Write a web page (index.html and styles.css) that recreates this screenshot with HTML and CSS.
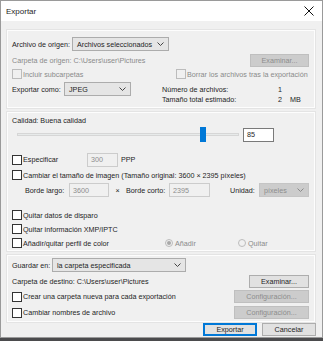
FILE: index.html
```html
<!DOCTYPE html>
<html lang="es">
<head>
  <meta charset="UTF-8" />
  <title>Exportar</title>
  <link rel="stylesheet" href="styles.css">
</head>
<body>
  <div class="window">
    <div class="titlebar">
      <span class="title">Exportar</span>
      <svg class="close" width="10" height="10" viewBox="0 0 10 10"><path d="M0.5 0.5L9.5 9.5M9.5 0.5L0.5 9.5" stroke="#111" stroke-width="1"/></svg>
    </div>

    <div class="content">
      <!-- Source -->
      <div class="group source">
        <div class="row h14">
          <label class="lbl w60">Archivo de origen:</label>
          <div class="select w97"><span>Archivos seleccionados</span><svg class="chev" width="7" height="4" viewBox="0 0 7 4"><path d="M0.5 0.5L3.5 3.5L6.5 0.5" fill="none" stroke="#444"/></svg></div>
        </div>
        <div class="row h13 mt3">
          <span class="muted">Carpeta de origen: C:\Users\user\Pictures</span>
          <span class="spacer"></span>
          <button class="btn disabled w59">Examinar...</button>
        </div>
        <div class="row h12 mt1">
          <div class="check-item disabled w164"><span class="box"></span>Incluir subcarpetas</div>
          <div class="check-item disabled"><span class="box"></span>Borrar los archivos tras la exportación</div>
        </div>
        <div class="row top mt2">
          <div class="format w150">
            <label class="lbl w52">Exportar como:</label>
            <div class="select w67"><span>JPEG</span><svg class="chev" width="7" height="4" viewBox="0 0 7 4"><path d="M0.5 0.5L3.5 3.5L6.5 0.5" fill="none" stroke="#444"/></svg></div>
          </div>
          <div class="info">
            <div class="info-line"><span class="info-key">Número de archivos:</span><span class="info-val">1</span></div>
            <div class="info-line"><span class="info-key">Tamaño total estimado:</span><span class="info-val">2</span><span>MB</span></div>
          </div>
        </div>
      </div>

      <!-- Image options -->
      <div class="group image">
        <div class="row h10">Calidad: Buena calidad</div>
        <div class="row h15 mt2">
          <div class="slider">
            <div class="track"></div>
            <div class="thumb" style="left: 183px"></div>
          </div>
          <div class="input w31">85</div>
        </div>
        <div class="row h13 mt11">
          <div class="check-item w75"><span class="box"></span>Especificar</div>
          <div class="input disabled w31">300</div>
          <span class="unit">PPP</span>
        </div>
        <div class="row h10 mt4">
          <div class="check-item"><span class="box"></span>Cambiar el tamaño de imagen (Tamaño original: 3600 × 2395 píxeles)</div>
        </div>
        <div class="row h14 mt3 indent">
          <label class="lbl w44">Borde largo:</label>
          <div class="input disabled w40">3600</div>
          <span class="times">×</span>
          <label class="lbl w43">Borde corto:</label>
          <div class="input disabled w41">2395</div>
          <label class="lbl w29 ml20">Unidad:</label>
          <div class="select disabled w50"><span>píxeles</span><svg class="chev" width="7" height="4" viewBox="0 0 7 4"><path d="M0.5 0.5L3.5 3.5L6.5 0.5" fill="none" stroke="#8a8a8a"/></svg></div>
        </div>
        <div class="row h10 mt13">
          <div class="check-item"><span class="box"></span>Quitar datos de disparo</div>
        </div>
        <div class="row h10 mt4">
          <div class="check-item"><span class="box"></span>Quitar información XMP/IPTC</div>
        </div>
        <div class="row h10 mt4">
          <div class="check-item w153"><span class="box"></span>Añadir/quitar perfil de color</div>
          <div class="radio-item disabled checked w73"><span class="dot"></span>Añadir</div>
          <div class="radio-item disabled"><span class="dot"></span>Quitar</div>
        </div>
      </div>

      <!-- Destination -->
      <div class="group dest">
        <div class="row h14">
          <label class="lbl w40">Guardar en:</label>
          <div class="select w134"><span>la carpeta especificada</span><svg class="chev" width="7" height="4" viewBox="0 0 7 4"><path d="M0.5 0.5L3.5 3.5L6.5 0.5" fill="none" stroke="#444"/></svg></div>
        </div>
        <div class="row h13 mt3">
          <span>Carpeta de destino: C:\Users\user\Pictures</span>
          <span class="spacer"></span>
          <button class="btn w60">Examinar...</button>
        </div>
        <div class="row h13 mt2">
          <div class="check-item"><span class="box"></span>Crear una carpeta nueva para cada exportación</div>
          <span class="spacer"></span>
          <button class="btn disabled w75">Configuración...</button>
        </div>
        <div class="row h13 mt3">
          <div class="check-item"><span class="box"></span>Cambiar nombres de archivo</div>
          <span class="spacer"></span>
          <button class="btn disabled w75">Configuración...</button>
        </div>
      </div>

      <div class="footer">
        <button class="btn default w54">Exportar</button>
        <button class="btn w54">Cancelar</button>
      </div>
    </div>
  </div>
</body>
</html>
```

FILE: styles.css
```css
* {
  box-sizing: border-box;
  margin: 0;
  padding: 0;
}
body {
  font-family: 'Liberation Sans', Arial, sans-serif;
  font-size: 7.2px;
  color: #1e1e1e;
  background-color: #4b4b4d;
  overflow: hidden;
}
.window {
  width: 323px;
  height: 338px;
  background-color: #f0f0f0;
  border: 1px solid #9a9a9a;
  display: flex;
  flex-direction: column;
}
.titlebar {
  height: 20px;
  background-color: #fff;
  display: flex;
  align-items: center;
  justify-content: space-between;
  padding: 0 8px 0 5px;
  font-size: 8px;
}
.close {
  display: block;
}
.content {
  padding: 9px 7px 0 6px;
  display: flex;
  flex-direction: column;
  gap: 4px;
}
.group {
  border: 1px solid #fdfdfd;
  box-shadow: 0 0 0 1px #e4e4e4;
  padding: 6px 5px 3px 4px;
}
.group.image {
  padding-top: 2px;
  padding-bottom: 2px;
}
.group.dest {
  padding-top: 2px;
  padding-bottom: 2px;
}
.row {
  display: flex;
  align-items: center;
  white-space: nowrap;
}
.row.top {
  align-items: flex-start;
}
.spacer {
  flex: 1;
}
.indent {
  padding-left: 13px;
}
.h10 { height: 10px; }
.h12 { height: 12px; }
.h13 { height: 13px; }
.h14 { height: 14px; }
.h15 { height: 15px; }
.mt1 { margin-top: 1px; }
.mt2 { margin-top: 2px; }
.mt3 { margin-top: 3px; }
.mt4 { margin-top: 4px; }
.mt11 { margin-top: 11px; }
.mt13 { margin-top: 13px; }
.ml20 { margin-left: 20px; }
.w29 { width: 29px; }
.w31 { width: 31px; }
.w40 { width: 40px; }
.w41 { width: 41px; }
.w43 { width: 43px; }
.w44 { width: 44px; }
.w50 { width: 50px; }
.w52 { width: 52px; }
.w54 { width: 54px; }
.w59 { width: 59px; }
.w60 { width: 60px; }
.w67 { width: 67px; }
.w73 { width: 73px; }
.w75 { width: 75px; }
.w97 { width: 97px; }
.w134 { width: 134px; }
.w150 { width: 150px; }
.w153 { width: 153px; }
.w164 { width: 164px; }
.lbl {
  flex-shrink: 0;
}
.muted {
  color: #8a8a8a;
}
.select {
  height: 14px;
  background-color: #e5e5e5;
  border: 1px solid #acacac;
  display: flex;
  align-items: center;
  justify-content: space-between;
  padding: 0 4px 0 4px;
  flex-shrink: 0;
}
.select.disabled {
  background-color: #cccccc;
  border-color: #c5c5c5;
  color: #8d8d8d;
}
.chev {
  display: block;
}
.btn {
  height: 13px;
  font-family: inherit;
  font-size: 7.2px;
  background-color: #e1e1e1;
  border: 1px solid #adadad;
  color: #1e1e1e;
  flex-shrink: 0;
}
.btn.disabled {
  background-color: #cccccc;
  border-color: #bfbfbf;
  color: #8d8d8d;
}
.btn.default {
  border-color: #0078d7;
  box-shadow: inset 0 0 0 1px #0078d7;
}
.check-item, .radio-item {
  display: flex;
  align-items: center;
  flex-shrink: 0;
}
.box {
  width: 10px;
  height: 10px;
  border: 1px solid #333;
  background-color: #fff;
  margin-right: 1px;
}
.check-item.disabled {
  color: #8a8a8a;
}
.check-item.disabled .box {
  border-color: #bcbcbc;
  background-color: #f0f0f0;
}
.dot {
  width: 8px;
  height: 8px;
  border-radius: 50%;
  border: 1px solid #bcbcbc;
  background-color: #f0f0f0;
  margin-right: 2px;
  display: flex;
  align-items: center;
  justify-content: center;
}
.radio-item.checked .dot::after {
  content: "";
  width: 4px;
  height: 4px;
  border-radius: 50%;
  background-color: #a8a8a8;
}
.radio-item.disabled {
  color: #8a8a8a;
}
.format {
  display: flex;
  align-items: center;
  height: 14px;
}
.info {
  margin-top: 2px;
}
.info-line {
  display: flex;
  height: 10px;
  align-items: center;
}
.info-key {
  width: 116px;
}
.info-val {
  width: 12px;
}
.slider {
  position: relative;
  width: 222px;
  height: 15px;
  margin-left: 5px;
  margin-right: 4px;
}
.track {
  position: absolute;
  left: 0;
  right: 0;
  top: 6px;
  height: 3px;
  background-color: #e7eaea;
  border: 1px solid #d6d6d6;
}
.thumb {
  position: absolute;
  top: 0;
  width: 6px;
  height: 15px;
  background-color: #0078d7;
}
.input {
  height: 14px;
  background-color: #fff;
  border: 1px solid #7a7a7a;
  padding: 0 3px;
  display: flex;
  align-items: center;
  flex-shrink: 0;
}
.input.disabled {
  background-color: #f0f0f0;
  border-color: #cccccc;
  color: #8d8d8d;
}
.unit {
  margin-left: 3px;
}
.times {
  width: 18px;
  text-align: center;
}
.footer {
  display: flex;
  justify-content: flex-end;
  gap: 5px;
  margin-top: -3px;
  margin-right: -1px;
}
```
